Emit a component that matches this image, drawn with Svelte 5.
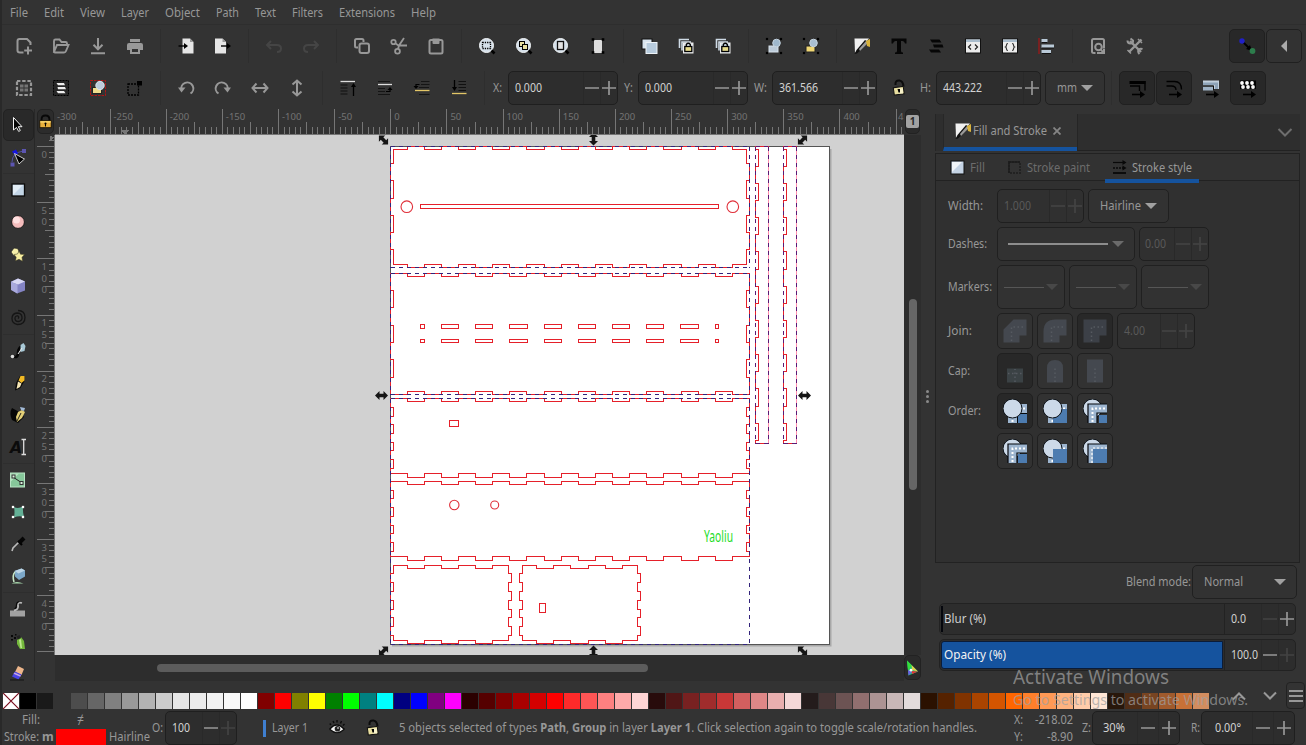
<script>
  const menus = [['File', 18], ['Edit', 20], ['View', 25], ['Layer', 28], ['Object', 35], ['Path', 23], ['Text', 21], ['Filters', 31], ['Extensions', 56], ['Help', 25]];

  const G = '#989898';
  const line = (d, c = G, w = 2) => `<path d="${d}" fill="none" stroke="${c}" stroke-width="${w}"/>`;
  const fill = (d, c = G) => `<path d="${d}" fill="${c}"/>`;
  const box = (x, y, w, h, f, s = '#000', sw = 1) => `<rect x="${x}" y="${y}" width="${w}" height="${h}" fill="${f}" stroke="${s}" stroke-width="${sw}"/>`;
  const disc = (x, y, r, f, s = 'none', sw = 1) => `<circle cx="${x}" cy="${y}" r="${r}" fill="${f}" stroke="${s}" stroke-width="${sw}"/>`;
  const lens = disc(11.5, 11.5, 7, '#d5e0ea', '#f2f5f7') + line('M16.5 16.5L19.5 19.5', '#000', 2.6);
  const corners = (a, b, c, d, f = '#000', s = 2.6) => [[a, b], [c, b], [a, d], [c, d]].map(([x, y]) => `<rect x="${x - s / 2}" y="${y - s / 2}" width="${s}" height="${s}" fill="${f}"/>`).join('');
  const pad = (x, y) => box(x, y + 3.5, 7, 5, '#e8dc8c', '#000', 1.3) + line(`M${x + 1.5} ${y + 3.5}v-2q2-2.5 4 0v2`, '#000', 1.3);
  const lowArrow = line('M7 18.500h9', '#000', 1.6) + fill('M15 15l5 3.500-5 3.500z', '#000');

  const icons = {
    new: line('M11.500 18.500H8Q5.500 18.500 5.500 16.500V7q0-2 2-2h7.500l3.500 3.500V11') + line('M16 12.500v8M12.200 16.500h7.800'),
    open: line('M5 18V7q0-1.500 1.500-1.500h4l2 2.500h4q1.500 0 1.500 1.500V11M5 18l3-7h11.500l-2.500 6q-.5 1.500-2 1.500H6z', G, 1.9),
    save: line('M12 4v11M7.500 10.800l4.500 4.500 4.500-4.500M5 19.200h14'),
    print: fill('M7 5h10v3H7zM4 11q0-2 2-2h12q2 0 2 2v5h-3v-3H7v3H4z') + line('M8 14h8v5H8z'),
    imp: fill('M8.500 4.500h7.500l3.500 3.500v11.500h-11z', '#e6e6e6') + fill('M16 4.500l3.500 3.500h-3.500z', '#999') + line('M4.500 12h6', '#000', 1.4) + fill('M10 9l4 3-4 3z', '#000'),
    exp: fill('M4 4.500h7.500l3.500 3.500v11.500H4z', '#e6e6e6') + fill('M11.500 4.500l3.500 3.500h-3.500z', '#999') + line('M10 12h7', '#000', 1.4) + fill('M16 9l4 3-4 3z', '#000'),
    undo: line('M9 7l-4 4 4 4M5.500 11H15q4 0 4 3.500T15 18', '#454545'),
    redo: line('M15 7l4 4-4 4M18.500 11H9q-4 0-4 3.500T9 18', '#454545'),
    copy: line('M8 13.500H6.500Q5 13.500 5 12V6.500Q5 5 6.500 5H12q1.500 0 1.500 1.500V8') + '<rect x="9.500" y="9.500" width="9.500" height="9.500" rx="2" fill="none" stroke="#989898" stroke-width="2"/>',
    cut: disc(6.500, 8, 2.200, 'none', G, 1.8) + disc(10.500, 17.300, 2.400, 'none', G, 1.8) + line('M8.600 9.500L11.500 11.500M11 15l1-3.500 5-7.500M12 11.500h8', G, 1.8),
    paste: '<rect x="5.500" y="6" width="13" height="13.500" rx="1.500" fill="none" stroke="#989898" stroke-width="2"/>' + fill('M8.500 4.500h7V9q0 1-1 1h-5q-1 0-1-1z'),
    zsel: lens + '<rect x="7.500" y="8.500" width="8" height="6" fill="none" stroke="#000" stroke-width="1.300" stroke-dasharray="1.300 1"/>',
    zdraw: lens + box(7.500, 7.500, 5, 5, '#e6dfa0') + box(10.500, 10.500, 5, 5, '#e6dfa0'),
    zpage: lens + box(8.500, 7.500, 6, 8, '#e4e4e4', '#111', 1.3),
    page: fill('M8 6h8v13H8z', '#ddd') + corners(7, 5.500, 17, 18.500),
    dup: box(5, 5, 10, 10, '#d9e4ee', '#111') + box(9, 8.500, 11, 11, '#b7cbdd', '#eef3f7'),
    clone: line('M5.500 14V5.500H15M8 16.500V8h9', '#cfdbe6', 1.6) + box(9.500, 9, 9.500, 10, '#e2e8ee', '#eee') + pad(10.800, 9),
    unclone: line('M5.500 14V5.500H15M8 16.500V8h9', '#cfdbe6', 1.6) + box(9.500, 9, 9.500, 10, '#cfdde9', '#eee') + pad(10.800, 9),
    group: corners(5, 5, 19, 19, '#000', 2.2) + box(7, 12, 9, 6, '#bccbd9', '#d8e2eb') + disc(14.500, 9, 3.800, '#9fb8cd', '#c5d4e0'),
    ungroup: corners(5, 5, 19, 19, '#000', 2.2) + box(7, 12, 9, 6, '#f0d774', '#222') + disc(14.500, 9, 3.800, '#a9bfd2', '#c5d4e0'),
    fillstroke: fill('M4.500 4.500L19 4.500 5 19z', '#f1f1f1') + fill('M19 8.500L7 19.500 4.500 20l2-4L15 6z', '#111') + fill('M9 15l7-8 2 2-8 8z', '#999') + fill('M16 7l4-2V13l-3-1z', '#d9b33c'),
    text: fill('M4.500 4.500h15v5h-1.500q-.5-2.500-2.500-2.500H14v10q0 1.500 2 1.500v1.500H8v-1.500q2 0 2-1.500V7H8.500q-2 0-2.500 2.500H4.500z', '#060606'),
    layers: fill('M6 5.500h9.500l2 3H8zM9 10.500h9.500l1 3H10zM5 15.500h10l2 3H7z', '#060606'),
    xml: box(4.500, 5, 15, 14, '#ececec', '#111') + fill('M5 5.500h14v2.500H5z', '#a9bccc') + line('M10 10.500L7.500 13l2.500 2.500M14 10.500l2.500 2.500-2.500 2.500', '#222', 1.2),
    css: box(4.500, 5, 15, 14, '#ececec', '#111') + fill('M5 5.500h14v2.500H5z', '#a9bccc') + line('M10 9.500q-1.500 0-1.500 1.500t-1 2q1 .5 1 2t1.500 1.500M14 9.500q1.500 0 1.500 1.500t1 2q-1 .5-1 2t-1.500 1.500', '#333', 1.2),
    align: line('M4 4v16', '#a01818', 1.3) + fill('M6.500 5h6v3.500h-6zM6.500 10.500H19V14H6.500zM6.500 16H16v3.500H6.500z', '#b9c9d7') + line('M6.500 8.500h6M6.500 14h12.500M6.500 19.500h9.500', '#111', 1),
    find: line('M9.500 19H8q-2 0-2-1.500V6.500Q6 5 7.500 5h9Q18 5 18 6.500v8', G, 2) + disc(12.500, 13, 3.300, 'none', G, 2) + line('M14.500 15l3.500 4.500M11 19h7v-4', G, 2),
    tools: line('M7 7l11 11M18.500 5.500L6 18', G, 2.4) + line('M4.500 6.500q0 3 3 3t2.500-3l-2.500-2M19.500 15q-3-1-4 1t1 4', G, 2) + line('M15 5l4 4M4.500 16l3.500 3.500', G, 1.5),
    snap: line('M8 8l7 7', '#000', 1.8) + fill('M17 17l-6-2 4-4z', '#000') + disc(7, 7, 2.700, '#2020c8') + disc(17.500, 17, 2.900, '#2d7d4c'),
    left: fill('M15 6v12L9 12z', '#aaa'),
    // selection and transform controls
    selall: '<rect x="5" y="5" width="14" height="14" fill="none" stroke="#989898" stroke-width="2.200" stroke-dasharray="3.400 1.800"/>' + '<path d="M8 10h8M8 14h8" stroke="#747474" stroke-width="3" stroke-dasharray="3.500 1"/>',
    sellay: '<rect x="4.500" y="4.500" width="15" height="15" fill="#262626" stroke="#000" stroke-dasharray="2 1"/>' + fill('M7.500 7h7.500l1 2.200H9zM8.500 11h7.500l1 2.200H9zM7.500 15h7.500l1.500 2.200H9z', '#eee'),
    desel: '<rect x="4.500" y="4.500" width="15" height="15" fill="none" stroke="#b01515" stroke-dasharray="2.500 1"/>' + box(6.500, 11.500, 9, 6, '#f0dc8c', '#222') + disc(14, 9.500, 4.200, '#bccbdc', '#dde6ee'),
    touch: '<rect x="5" y="8" width="10.500" height="11" fill="none" stroke="#000" stroke-width="1.300" stroke-dasharray="2 1"/>' + fill('M14 5h5v4.500h-5z', '#000'),
    rotl: line('M7.500 14a6 6 0 1 1 9 3.500') + fill('M4 11.500h7.500L7.500 16.500z'),
    rotr: line('M16.500 14a6 6 0 1 0-9 3.500') + fill('M20 11.500h-7.500l4 5z'),
    fliph: line('M6 12h12') + line('M8.500 7.500L4.500 12l4 4.500M15.500 7.500l4 4.500-4 4.500'),
    flipv: line('M12 6v12') + line('M7.500 8.500L12 4.500l4.500 4M7.500 15.500l4.500 4 4.500-4'),
    top: line('M4.500 5.500H19', '#ddd', 1.3) + line('M4.500 9h7M4.500 12h7M4.500 15h7M4.500 18h7', '#111', 1.2) + line('M17.500 9v11', '#000', 1.3) + fill('M17.500 7l2.500 4h-5z', '#000'),
    raise: line('M5 5.500h12M5 12.500h7M5 15.500h7M5 18.500h12', '#151515', 1.2) + line('M5 8.500h14', '#ddd', 1.3) + line('M13 15.500h4V13', '#000', 1.2) + fill('M17 11l2.500 3h-5z', '#000'),
    lower: line('M11 5.500h8.500M11 8.500h8.500M9 18.500h10.500M9 11.500h10', '#151515', 1.2) + line('M5 14.500h14.500', '#e3c667', 1.3) + line('M6 11V8.500h3.500', '#000', 1.2) + fill('M6 13l-2.500-3h5z', '#000'),
    bottom: line('M11.500 5.500H19M11.500 8.500H19M11.500 11.500H19M11.500 14.500H19', '#111', 1.2) + line('M5 17.500h14.500', '#e3c667', 1.3) + line('M7.500 4v8', '#000', 1.3) + fill('M7.500 15l-2.500-4h5z', '#000'),
    unlock: line('M8.500 9q-.5-5 4-4.500 3.500.5 4 6', '#0c0c0c', 2) + `<g transform="rotate(-8 12 15)">${box(6.800, 11, 10, 7.500, '#e9dfa0', '#111')}</g>` + fill('M12 12.500h4v5h-4z', '#f6f0c8') + fill('M10.500 13h2.500v3.500h-1.500z', '#000'),
    lock: line('M7.500 11V9q0-4.500 4.500-4.500T16.500 9v2', '#080808', 2.2) + box(5.500, 10.500, 13, 8, '#e9b03c', '#1a1204') + fill('M6 11h12v1.500H6z', '#ffdf78') + disc(12, 13.700, 1.200, '#000') + fill('M11.400 14h1.200v3h-1.200z', '#000'),
    scstroke: fill('M4.500 5h16v3h-16z', '#000') + line('M5 10h9.500v5M20 5v9.500', '#000', 1.4) + lowArrow,
    scround: line('M4.500 5.500h8q7 0 7 8M4.500 10h5q4.500 0 4.500 4', '#000', 1.3) + lowArrow,
    scgrad: fill('M4 4.500h16V13h-5V9.500H4z', '#c3d0dd') + fill('M4 6.500h15V13h-3V9H4z', '#8ea3b8') + fill('M4 10.500h10v4H4z', '#9fb2c5') + line('M4 10h10.500v4', '#111', 1) + lowArrow,
    scpat: fill('M4 4.500h16V13H4z', '#000') + [5.5, 10.5, 15.5].map((x) => disc(x + .5, 7, 1.900, '#fff') + disc(x + 1.500, 11, 1.900, '#f6f6f6')).join('') + lowArrow,
    // toolbox
    select: fill('M7.500 4.500v13l3-2.500 2 4 2-1-2-4H16z', '#050505') + line('M7.500 4.500v12.500l3-2.500 2.200 4 1.600-1-2-3.800H16z', '#f5f5f5', 1),
    node: line('M6 17Q6 8 17 6', '#5252a8', 1) + fill('M16 4h4v4h-4zM4.500 17.500h4v4h-4z', '#5c55b0') + fill('M6 6.500l4-2 2 4-3 2z', '#1414e0') + fill('M8.500 8.500l10 5.500-6 5z', '#000') + line('M8.500 8.500l10 5.500-5.500 5z', '#ddd', .9),
    rect: box(6, 6, 12.500, 12, '#c2d5e6', '#0b0b0b', 1.3) + fill('M7 7h10L7 17z', '#e1ecf5'),
    ellipse: disc(12, 12, 6.400, '#f4bcbc', '#191919') + disc(10.500, 10, 3.500, '#ffe0e0'),
    star: fill('M8 6l3.500 .5 1.500 2.500-1 4-4.500 .5L5 10z', '#f6efaa') + line('M8 6l3.500 .5 1.500 2.500-1 4-4.500 .5L5 10z', '#222', .7) + fill('M13 9l1.500 3.200 4 .3-2.500 2.800.5 4-3.500-2-3.500 1.500.7-3.600L8 12.500l3.500-.5z', '#f7eea0') + line('M13 9l1.500 3.200 4 .3-2.500 2.800.5 4-3.500-2-3.500 1.500.7-3.600L8 12.500l3.500-.5z', '#3b3820', .5),
    cube: fill('M12 4.500l7 3v9l-8 3-6-4V7.500z', '#8484c4') + fill('M12 4.500l7 3-7 3-7-2.500z', '#d8d8f3') + fill('M5 8l6.500 2.500v9L5 16z', '#a9a9dc'),
    spiral: line('M12 12.500q1.500-1.500 0-2.500-3-.5-3 2.500t3.500 3q4-.5 3.500-4.500T11 7q-5 .5-5 5.500t5.500 6q7.500 0 7.500-7T12 4.500', '#151515', 1.3),
    bezier: line('M6 17q6 3 6-3t6-8', '#050505', 2.6) + fill('M14.500 6l3-2 2 3-1 5-4 1z', '#a8c8d6') + line('M12 15l4-6', '#eee', 1) + disc(6.500, 17.500, 1.800, '#ddd'),
    pencil: fill('M10 12l4-7h4.500v5l-4 7-5.500 2.500z', '#070707') + fill('M14.500 5h4v4.500l-3 2.500-3-2.500z', '#f1b925') + fill('M12 10.500l3.500 2-1.500 3.500-3.500 2z', '#f5e6b4'),
    callig: fill('M6 5q-3 5 0 12l6 3 6-6-3-4z', '#060606') + fill('M12 9l4-2 3 2-3 6-5 4-1-5z', '#e3cf76') + fill('M14 4l5 1-1 3-3-1z', '#a3bbd8') + line('M11 18l4-8', '#111', .9),
    texttool: '<text x="4" y="18" font-family="DejaVu Sans" font-weight="bold" font-size="15.500" font-style="italic" fill="#0b0b0b">A</text>' + line('M15.500 4.500h4.500M15.500 19.500h4.500M17.700 5v14', '#ddd', 1.3),
    grad: box(4.500, 5, 14, 14, '#86c79a', '#b8e3c4') + fill('M5 5.500h8l-8 8z', '#b5e3c1') + line('M7 9l9 6', '#222', 1) + box(6, 7, 3, 3, '#d8f0de', '#333') + box(14, 13.500, 3, 3, '#d8f0de', '#333'),
    mesh: fill('M8 7q4 2 9-.5-.5 5 1 10.500-5-1.500-10 .5Q9 12 8 7z', '#64b096') + corners(7, 7, 17, 17, '#fff', 2.3),
    dropper: line('M6 19l1-3 6-6', '#bbb', 1.6) + line('M12 9l4 4', '#000', 2.2) + line('M13.500 10.500l4.500-4.500', '#050505', 4),
    bucket: fill('M8.500 7l7-2.500 3.500 2v6l-6 3.500-4-3.500z', '#7ba7c8') + fill('M8.500 7l7-2.500 3.500 2-6.500 3z', '#bcd5e6') + line('M9 8q-3 3-1 10', '#c9e9c9', 1.6) + fill('M5.500 19.500q5-3 12 0z', '#a9d9ae'),
    tweak: fill('M4 13.500h15v6H4z', '#a2a2a2') + line('M8 13.500q5-1 4-5t4-2.500', '#bbb', 1.8) + line('M8.500 12q2-1 2-4t3-3.500', '#080808', 1.2),
    spray: fill('M11 11l4-3 3 4 1 8-5 0-3-5z', '#74b83c') + fill('M13 11l2-1 1 9h-1.500z', '#bfe892') + fill('M10.500 7.500l3-1.500 1.500 3-3 1.500z', '#222') + fill('M5 6h2v2H5zM8 8h2v2H8zM5 10h2v1.500H5zM9 5h1.500v1.500H9z', '#080808'),
    eraser: fill('M12 5l6 3-2.500 6-6.500-3z', '#edb68b') + fill('M9 10.500l6.500 3L12.500 18.500 6 15.500z', '#4a43e6') + fill('M8.500 11.500l6.500 3-.7 1.200L7.500 12.700z', '#c8a7e0') + line('M4 19h14', '#151515', 1),
    // panel
    fillsq: box(5, 5, 13, 13, '#c4d3e4', '#111') + fill('M6 6h10L6 16z', '#f1f5f9'),
    paintsq: '<rect x="6" y="6" width="11" height="11" fill="none" stroke="#222" stroke-width="2" stroke-dasharray="2 1"/>' + line('M6 17V6h11', '#1c1c1c', 1.4),
    stylesq: line('M5 6.500h12', '#080808', 1.2) + '<path d="M5 12h12" stroke="#080808" stroke-width="1.600" stroke-dasharray="2 1"/>' + line('M5 17h13', '#080808', 1.8) + fill('M14.500 4l4 2.500-4 2.500zM14.500 9.500L18.500 12l-4 2.500z', '#080808'),
    eye: fill('M5 13q7-8 14 0-7 7-14 0z', '#f2f2f2') + line('M4.500 13.500q7-9 15 0M6 9L4.800 7.500M9 7L8 5M12 6.500V4M15.500 7.500l1-2.500M18 9.500l1.500-1.500', '#0a0a0a', 1.4) + line('M5 13.500q7 6.500 14 0', '#111', 1.1) + disc(12.500, 12.800, 2.800, '#222') + disc(13, 12, 1, '#aaa'),
    cms: fill('M6 4.500l11 11-9.500 4z', '#19c37a') + fill('M6 4.500l5 5-4 5z', '#35e03a') + fill('M10.500 9l6.500 6.500-6-1.500z', '#ddd24c') + fill('M10.500 15l6.500 .5-6 2.500z', '#e33434') + fill('M7 14l4 2-3.500 3.500z', '#6f5ae8') + disc(10, 14.200, 1.400, '#fff')
  };

  const dots = (d) => `<path d="${d}" fill="none" stroke="#565a61" stroke-width="1.500" stroke-dasharray="1.500 2.500"/>`;
  const J = '#44484f';
  const joins = [
    fill('M.5 23.500v-13l10-10h13v16h-7v7z', J) + dots('M8.500 22V8h14'),
    fill('M.5 23.500v-11q0-12 12-12h11v16h-7v7z', J) + dots('M8.500 22V8h14'),
    fill('M.5 23.500V.5h23v16h-7v7z', '#3c4047') + dots('M8.500 22V8h14')
  ];
  const caps = [
    fill('M4 9.500h16v14H4z', '#3b4245') + dots('M12 23V10M5 14.500h14'),
    fill('M4 23.500V9q0-8 8-8t8 8v14.500z', J) + dots('M12 23V9'),
    fill('M4 .5h16v23H4z', J) + dots('M12 23V9')
  ];
  const circ = disc(9.500, 9.500, 9.500, '#ccd9e8', '#0b1016', 1);
  const blue = (x, y) => `<rect x="${x}" y="${y}" width="${24 - x}" height="${24 - y}" fill="#4d7cb0"/>`;
  const ell = fill('M5 5h19v9H14v10H5z', '#9db5cf') + '<path d="M9.500 23V9.500H24" fill="none" stroke="#fff" stroke-width="2" stroke-dasharray="2 2"/>';
  const ellO = ell + line('M5 24V5h19', '#05080c', 1.2) + line('M14 24V14h10', '#05080c', 1.2);
  const edge = (x, y) => `<path d="M${x + 1} 24V${y + 1}H24" fill="none" stroke="#fff" stroke-width="1.200" stroke-dasharray="2 2"/>`;
  const orders = [
    ell + blue(15, 15) + line('M14.500 24v-9.500H24', '#05080c', 1) + circ,
    ell + blue(10, 10) + circ,
    circ + ellO + blue(16, 16),
    circ + ellO + blue(15, 15),
    ell + circ + blue(10, 10),
    circ + fill('M5 5h19v19H5z', '#9db5cf') + line('M5 24V5h19', '#05080c', 1.2) + blue(10, 10) + edge(8, 8)
  ];

  const row1 = ['new', 'open', 'save', 'print', '', 'imp', 'exp', '', 'undo', 'redo', '', 'copy', 'cut', 'paste', '', 'zsel', 'zdraw', 'zpage', 'page', '', 'dup', 'clone', 'unclone', '', 'group', 'ungroup', '', 'fillstroke', 'text', 'layers', 'xml', 'css', 'align', '', 'find', 'tools'];
  const row2 = ['selall', 'sellay', 'desel', 'touch', '', 'rotl', 'rotr', 'fliph', 'flipv', '', 'top', 'raise', 'lower', 'bottom', ''];
  const tools = ['select', 'node', '', 'rect', 'ellipse', 'star', 'cube', 'spiral', '', 'bezier', 'pencil', 'callig', 'texttool', '', 'grad', 'mesh', 'dropper', 'bucket', '', 'tweak', 'spray', 'eraser'];

  const swatches = '000000 1a1a1a 333333 4d4d4d 666666 808080 999999 b3b3b3 cccccc e6e6e6 ececec f2f2f2 f9f9f9 ffffff 800000 ff0000 808000 ffff00 008000 00ff00 008080 00ffff 000080 0000ff 800080 ff00ff 2b0000 550000 800000 aa0000 d40000 ff0000 ff2a2a ff5555 ff8080 ffaaaa ffd5d5 280b0b 501616 782121 a02c2c c83737 d35f5f de8787 e9afaf f4d7d7 241c1c 483737 6c5353 916f6f ac9393 c8b7b7 e3dbdb 2b1100 552200 803300 aa4400 d45500 ff6600 ff7f2a ff9955 ffb380 ffccaa ffe6d5 28170b 502d16 784421 a05a2c c87137 d38d5f'.split(' ');

  // rulers: 1 mm = 1.1229 px at 30 % zoom
  const mm = 1.1229;
  const hTicks = [];
  for (let v = -295; v <= 455; v += 5) hTicks.push({ v, p: Math.floor(390.8 + v * mm) + 0.5 });
  const vTicks = [];
  for (let v = -5; v <= 450; v += 5) vTicks.push({ v, p: Math.floor(146.6 + v * mm) + 0.5 });
  const len = (v, a, b, c) => (v % 50 === 0 ? a : v % 25 === 0 ? b : c);

  // finger-joint panels
  const P = 17.13;
  const seq = (from, n) => Array.from({ length: n }, (_, i) => from + i * P);
  function panel(x0, x1, y0, y1, dx, dy0, dy1, xs, ys) {
    // d* give the offset applied after each toggle
    let d = `M${x0} ${y0}`;
    let on = false;
    for (const x of xs) { d += `H${x}`; on = !on; d += `V${on ? y0 + dy0 : y0}`; }
    d += `H${x1}`; on = false;
    for (const y of ys) { d += `V${y}`; on = !on; d += `H${on ? x1 - dx : x1}`; }
    d += `V${y1}`; on = false;
    for (const x of [...xs].reverse()) { d += `H${x}`; on = !on; d += `V${on ? y1 + dy1 : y1}`; }
    d += `H${x0}`; on = false;
    for (const y of [...ys].reverse()) { d += `V${y}`; on = !on; d += `H${on ? x0 + dx : x0}`; }
    return d + 'Z';
  }
  const small = [573.7, 582.3, 591.3, 600, 609, 617.3, 626.3, 635.3];
  const panels = [
    panel(393.5, 746.5, 149.5, 264.5, -3, -3, 3, seq(407, 20), [163.5, 180.5, 198, 215.3, 232.5, 249.5]),
    panel(390.5, 749.5, 273.5, 394.5, 3, 3, -3, seq(407, 20), [290.3, 307.6, 325.3, 342.5, 359.5, 377.5]),
    panel(390.5, 749.5, 398.5, 473.6, 3, 3, 3.5, seq(407, 20), [407.3, 416.3, 424.7, 433.3, 442.3, 450.7, 459.3, 468.3]),
    panel(390.5, 749.5, 481.5, 556.6, 3, 3, 3.5, seq(407, 20), [490.3, 498.7, 507.7, 516.3, 525, 533.3, 542.3, 551.3]),
    panel(393.5, 508.5, 565.5, 640.5, -3, 3, 3, seq(407, 6), small),
    panel(522.5, 637.5, 565.5, 640.5, -3, 3, 3, seq(536.7, 6), small)
  ];
  function strip(x0, x1) {
    let d = `M${x1} 146.5H${x0}V149.500H${x0 + 3.5}`;
    let on = true;
    for (const y of seq(166.3, 17)) { d += `V${y}`; on = !on; d += `H${on ? x0 + 3.5 : x0}`; }
    return d + `V443.500H${x1}`;
  }
  const strips = [strip(755, 768.5), strip(783, 796.5)];
  const bounds = [[390.5, 146.5, 359, 121], [390.5, 273.5, 359, 121], [390.5, 398.5, 359, 246], [755.5, 146.5, 13, 297], [783.5, 146.5, 13, 297]];
  const slots = Array.from({ length: 8 }, (_, i) => 441.4 + i * 34.2);
  const handles = [[383.5, 140, 45], [593.5, 139, 90], [802.5, 140, -45], [381.500, 395.5, 0], [804.5, 395.5, 0], [383.5, 651, -45], [593.5, 652, 90], [802.5, 651, 45]];
</script>

{#snippet t(s, w, size = 12, cls = '')}
  <svg class="t {cls}" width={w} height="18"><text x="0" y="13" font-size={size} textLength={w} lengthAdjust="spacingAndGlyphs">{s}</text></svg>
{/snippet}

{#snippet ico(n)}
  <svg class="ico" width="24" height="24" viewBox="0 0 24 24">{@html icons[n]}</svg>
{/snippet}

{#snippet spin(w, h, value, vw, opts = {})}
  <div class="spin" class:off={opts.off} style:width="{w}px" style:height="{h}px" style:--cell="{opts.cell ?? 17}px" style:--pad="{opts.pad ?? 6}px">
    <span class="val">{@render t(value, vw, 12)}</span>
    <span class="cell" class:dim={opts.noMinus}><svg width="14" height="14"><path d="M0 7h14" /></svg></span>
    <span class="cell" class:dim={opts.noPlus}><svg width="14" height="14"><path d="M0 7h14M7 0v14" /></svg></span>
  </div>
{/snippet}

{#snippet tri()}
  <svg class="tri" width="12" height="6"><path d="M0 0h12L6 6z" /></svg>
{/snippet}

<div class="app">
  <nav class="menubar">
    {#each menus as [m, w]}{@render t(m, w, 12)}{/each}
  </nav>

  <div class="bar">
    {#each row1 as n}
      {#if n}<div class="slot">{@render ico(n)}</div>{:else}<div class="sep"></div>{/if}
    {/each}
    <div class="btns end">
      <div class="btn pressed">{@render ico('snap')}</div>
      <div class="btn">{@render ico('left')}</div>
    </div>
  </div>

  <div class="bar second">
    {#each row2 as n}
      {#if n}<div class="slot">{@render ico(n)}</div>{:else}<div class="sep"></div>{/if}
    {/each}
    <div class="field xl">{@render t('X:', 9)}{@render spin(110, 34, '0.000', 27)}</div>
    <div class="field yl">{@render t('Y:', 9)}{@render spin(110, 34, '0.000', 27)}</div>
    <div class="field wl">{@render t('W:', 13)}{@render spin(105, 34, '361.566', 39)}</div>
    <div class="slot lockslot">{@render ico('unlock')}</div>
    <div class="field hl">{@render t('H:', 11)}{@render spin(105, 34, '443.222', 39)}</div>
    <div class="combo unit">{@render t('mm', 20)}{@render tri()}</div>
    <div class="sep"></div>
    <div class="btns snapbtns">
      <div class="btn pressed">{@render ico('scstroke')}</div>
      <div class="btn pressed">{@render ico('scround')}</div>
      <div class="btn flat">{@render ico('scgrad')}</div>
      <div class="btn pressed">{@render ico('scpat')}</div>
    </div>
  </div>

  <main>
    <aside class="toolbox">
      {#each tools as n}
        {#if n}<div class="tool" class:active={n === 'select'}>{@render ico(n)}</div>{:else}<div class="hsep"></div>{/if}
      {/each}
    </aside>

    <section class="work">
      <div class="corner">{@render ico('lock')}</div>
      <svg class="ruler" width="849" height="26" viewBox="55 109 849 26">
        {#each hTicks as k}
          <path d="M{k.p} 134V{134 - len(k.v, 25, 12, 7)}" />
        {/each}
        {#each [-300, -250, -200, -150, -100, -50, 0, 50, 100, 150, 200, 250, 300, 350, 400] as v}
          <text x={v === -300 ? 57 : 390.8 + v * mm + 3.500} y="120">{v}</text>
        {/each}
        <text x="898" y="120">4</text>
        <path class="mark" d="M120.500 129.500h9l-4.500 5z" />
        <path d="M55 134.500H904" />
      </svg>
      <div class="pagebtn"><span>1</span></div>

      <svg class="ruler" width="19" height="520" viewBox="36 135 19 520">
        {#each vTicks as k}
          <path d="M54 {k.p}H{54 - len(k.v, 17, 9, 5)}" />
        {/each}
        {#each [0, 50, 100, 150, 200, 250, 300, 350, 400] as v}
          {#each String(v).split('') as c, i}
            <text x="41.500" y={157.800 + v * mm + i * 11.500}>{c}</text>
          {/each}
        {/each}
        <path class="mark" d="M49.500 136v6l5-5z" />
        <path d="M54.500 135V655" />
      </svg>

      <svg class="canvas" width="849" height="520" viewBox="55 135 849 520">
        <rect class="shadow" x="392" y="149" width="439.500" height="497.500" />
        <rect class="page" x="390.500" y="146.500" width="439" height="498" />
        <g class="cut">
          {#each panels as d}<path {d} />{/each}
          {#each strips as d}<path {d} />{/each}
          <path class="soft" d="M768.500 146.500V443.500M796.500 146.500V443.500" />
          <rect x="420.500" y="204.500" width="298" height="4" />
          {#each [324.5, 339.5] as y, r}
            <rect x="420.500" {y} width="4" height={r ? 3 : 4} />
            {#each slots as x}<rect {x} {y} width="17.300" height={r ? 3 : 4} />{/each}
            <rect x="715.500" {y} width="3" height={r ? 3 : 4} />
          {/each}
          <rect x="449.500" y="420.500" width="9" height="6" />
          <rect x="539.500" y="603.500" width="6" height="9" />
        </g>
        <g class="round">
          <circle cx="406.800" cy="206.700" r="5.800" />
          <circle cx="732.800" cy="206.700" r="5.800" />
          <circle cx="454.300" cy="505" r="4.700" />
          <circle cx="494.700" cy="505" r="4" />
        </g>
        {#each bounds as [x, y, w, h], i}
          <path class="bound" class:narrow={i > 2} d="M{x} {y}h{w}M{x} {y + h}h{w}M{x} {y}v{h}M{x + w} {y}v{h}" />
        {/each}
        <text class="sig" x="704" y="542" textLength="29" lengthAdjust="spacingAndGlyphs">Yaoliu</text>
        {#each handles as [x, y, a]}
          <path class="handle" transform="translate({x} {y}) rotate({a})" d="M-6.500 0L-2-4.500V-1.800H2V-4.500L6.500 0 2 4.500V1.800H-2V4.500z" />
        {/each}
      </svg>
      <div class="vscroll"><i></i></div>

      <div class="blank"></div>
      <div class="hscroll"><i></i></div>
      <div class="cms">{@render ico('cms')}</div>
    </section>

    <div class="splitter"><i></i><i></i><i></i></div>

    <aside class="dock">
      <div class="tabs">
        <div class="tab">{@render ico('fillstroke')}{@render t('Fill and Stroke', 74)}
          <svg class="close" width="8" height="8"><path d="M.5 .5l7 7M7.500 .5l-7 7" /></svg>
        </div>
        <div class="tabrest"><svg width="16" height="9"><path d="M1.500 1l6.500 6.500L14.500 1" /></svg></div>
      </div>
      <div class="panel">
        <div class="subtabs">
          <div class="sub s1">{@render ico('fillsq')}{@render t('Fill', 15, 12, 'faint')}</div>
          <div class="sub s2">{@render ico('paintsq')}{@render t('Stroke paint', 63, 12, 'faint')}</div>
          <div class="sub s3 on">{@render ico('stylesq')}{@render t('Stroke style', 60)}</div>
        </div>
        <div class="form">
          <div class="row">
            <div class="lab">{@render t('Width:', 35)}</div>
            {@render spin(87, 34, '1.000', 27, { off: true })}
            <div class="combo w81">{@render t('Hairline', 41)}{@render tri()}</div>
          </div>
          <div class="row">
            <div class="lab">{@render t('Dashes:', 39)}</div>
            <div class="combo dash"><i></i>{@render tri()}</div>
            {@render spin(70, 34, '0.00', 21, { off: true, pad: 5 })}
          </div>
          <div class="row tall">
            <div class="lab">{@render t('Markers:', 44)}</div>
            {#each [0, 1, 2] as _}<div class="combo marker"><i></i>{@render tri()}</div>{/each}
          </div>
          <div class="row mid">
            <div class="lab">{@render t('Join:', 24)}</div>
            {#each joins as j, i}<div class="btn" class:pressed={i === 2}><svg width="24" height="24">{@html j}</svg></div>{/each}
            {@render spin(78, 36, '4.00', 21, { off: true })}
          </div>
          <div class="row mid">
            <div class="lab">{@render t('Cap:', 22)}</div>
            {#each caps as c, i}<div class="btn" class:pressed={i === 0}><svg width="24" height="24">{@html c}</svg></div>{/each}
          </div>
          <div class="row mid">
            <div class="lab">{@render t('Order:', 33)}</div>
            {#each orders.slice(0, 3) as o, i}<div class="btn" class:pressed={i === 0}><svg width="24" height="24">{@html o}</svg></div>{/each}
          </div>
          <div class="row mid">
            <div class="lab"></div>
            {#each orders.slice(3) as o}<div class="btn"><svg width="24" height="24">{@html o}</svg></div>{/each}
          </div>
        </div>
      </div>
      <div class="blend">
        {@render t('Blend mode:', 65)}
        <div class="combo mode">{@render t('Normal', 39)}{@render tri()}</div>
      </div>
      <div class="slider">
        <div class="track"><b></b>{@render t('Blur (%)', 42, 12, 'bright')}</div>
        {@render spin(71, 30, '0.0', 15, { noMinus: true })}
      </div>
      <div class="slider">
        <div class="track full">{@render t('Opacity (%)', 62, 12, 'white')}</div>
        {@render spin(71, 30, '100.0', 27, { noPlus: true })}
      </div>
    </aside>
  </main>

  <div class="palette">
    <svg class="none" width="16" height="16"><path d="M0 0L16 16M16 0L0 16" /></svg>
    {#each swatches as c}<i style:background="#{c}"></i>{/each}
    <div class="palctl">
      <svg width="16" height="10"><path d="M2 8.500l6-6 6 6" /></svg>
      <svg width="16" height="10"><path d="M2 1.500l6 6 6-6" /></svg>
      <div class="burger"><svg width="14" height="14"><path d="M0 2h14M0 7h14M0 12h14" /></svg></div>
    </div>
  </div>

  <footer>
    <div class="style">
      <div class="sl fl">{@render t('Fill:', 18)}<span class="ne">{@render t('≠', 7)}</span></div>
      <div class="sl">{@render t('Stroke:', 35)}<svg class="t m" width="10" height="18"><text x="0" y="13" font-size="12" font-weight="bold">m</text></svg><b class="red"></b>{@render t('Hairline', 41)}</div>
    </div>
    <div class="opac">{@render t('O:', 11)}{@render spin(72, 34, '100', 18, { noPlus: true, pad: 6 })}</div>
    <div class="layer"><b></b>{@render t('Layer 1', 36)}<span class="eye">{@render ico('eye')}</span><span class="lk">{@render ico('unlock')}</span></div>
    <svg class="t msg" width="580" height="18"><text x="0" y="13" font-size="12" textLength="578" lengthAdjust="spacingAndGlyphs">5 objects selected of types <tspan font-weight="bold">Path</tspan>, <tspan font-weight="bold">Group</tspan> in layer <tspan font-weight="bold">Layer 1</tspan>. Click selection again to toggle scale/rotation handles.</text></svg>
    <div class="coords">
      <div>{@render t('X:', 9)}{@render t('-218.02', 38)}</div>
      <div>{@render t('Y:', 9)}{@render t('-8.90', 26)}</div>
    </div>
    <div class="zoom">{@render t('Z:', 9)}{@render spin(88, 34, '30%', 22, { cell: 21, pad: 10 })}</div>
    <div class="rot">{@render t('R:', 9)}{@render spin(94, 34, '0.00°', 26, { cell: 21, pad: 13 })}</div>
  </footer>

  <div class="watermark">
    <svg width="160" height="26"><text x="0" y="20" font-size="19" textLength="156" lengthAdjust="spacingAndGlyphs">Activate Windows</text></svg>
    <svg width="240" height="20"><text x="0" y="14" font-size="14" textLength="235" lengthAdjust="spacingAndGlyphs">Go to Settings to activate Windows.</text></svg>
  </div>
</div>

<style>
  :global(body) { margin: 0; background: #333; overflow: hidden; }
  .app { position: relative; width: 1306px; height: 745px; display: flex; flex-direction: column; overflow: hidden; background: #333; font-family: 'Noto Sans', sans-serif; color: #979797; box-sizing: border-box; border-left: 2px solid #292929; }
  .app * { box-sizing: border-box; }
  svg { display: block; flex: none; }
  .t { fill: #979797; overflow: visible; }
  .t.faint { fill: #6c6c6c; }
  .t.bright { fill: #cfcfcf; }
  .t.white { fill: #f2f2f2; }

  .menubar { display: flex; align-items: center; gap: 16px; height: 25px; padding: 1px 0 0 8px; border-bottom: 1px solid #2e2e2e; flex: none; }
  .bar { display: flex; align-items: center; height: 42px; padding-left: 3.5px; flex: none; }
  .slot { width: 37px; display: flex; justify-content: center; flex: none; }
  .sep { width: 14px; height: 34px; flex: none; background: linear-gradient(90deg, transparent 6px, #2e2e2e 6px, #2e2e2e 7px, transparent 7px); }
  .btns { display: flex; gap: 1px; }
  .btns.end { margin-left: auto; margin-right: 4px; }
  .btn { width: 36px; height: 34px; border: 1px solid #202020; border-radius: 5px; display: flex; align-items: center; justify-content: center; background: #323232; flex: none; }
  .btn.pressed { background: #282828; }
  .btn.flat { border-color: transparent; background: none; }
  .field { display: flex; align-items: center; justify-content: space-between; flex: none; }
  .xl { width: 125px; margin-left: 1px; }
  .yl { width: 124px; margin-left: 6px; }
  .wl { width: 123px; margin-left: 6px; }
  .lockslot { margin-left: 4px; }
  .hl { width: 121px; margin-left: 2px; }
  .combo { display: flex; align-items: center; justify-content: center; gap: 4px; height: 34px; border: 1px solid #202020; border-radius: 5px; background: #323232; flex: none; }
  .unit { width: 60px; margin-left: 4px; }
  .tri path { fill: #a0a0a0; }
  .snapbtns { margin-left: 0; }
  .snapbtns .btn:last-child { margin-left: 0; }

  .spin { display: flex; align-items: center; border: 1px solid #1f1f1f; border-radius: 5px; background: #2d2d2d; padding-left: var(--pad); flex: none; overflow: hidden; }
  .spin .val { flex: 1; }
  .spin .val :global(.t) { fill: #d2d2d2; }
  .spin .cell { width: var(--cell); height: 100%; border-left: 1px solid #292929; display: flex; align-items: center; justify-content: center; flex: none; }
  .spin .cell path { fill: none; stroke: #979797; stroke-width: 1.7; }
  .spin .cell.dim path { stroke: #434343; }
  .spin.off { background: #303030; }
  .spin.off .cell path { stroke: #444; }
  .spin.off .val :global(.t) { fill: #595959; }

  main { display: flex; height: 574px; flex: none; }
  .toolbox { width: 34px; padding-left: 1px; background: linear-gradient(90deg, transparent 32px, #282828 32px, #282828 33px, transparent 33px) no-repeat 0 0 / 100% 572px; }
  .tool { width: 31px; height: 32px; display: flex; align-items: center; justify-content: center; }
  .tool.active { background: #292929; border: 1px solid #222; border-radius: 5px; }
  .tool :global(svg) { margin-left: -1px; }
  .hsep { height: 1px; width: 31px; background: #2e2e2e; }

  .work { display: grid; grid-template-columns: 19px 849px 17px; grid-template-rows: 26px 520px 28px; flex: none; }
  .corner, .pagebtn, .cms { border: 1px solid #222; border-radius: 5px; display: flex; align-items: center; justify-content: center; overflow: hidden; }
  .corner { margin: 0 1px 1px 1px; background: #2c2c2c; }
  .corner :global(svg) { width: 21px; height: 22px; }
  .ruler path { stroke: #767676; stroke-width: 1; fill: none; shape-rendering: crispEdges; }
  .ruler .mark { fill: #777; stroke: none; }
  .ruler text { font-size: 9.5px; fill: #747474; }
  .pagebtn { margin: 0 1px 1px 1px; background: #2a2a2a; }
  .pagebtn span { width: 13px; height: 13px; border-radius: 2px; background: #a2a2a2; color: #2a2a2a; font-size: 10px; line-height: 13px; font-weight: bold; text-align: center; flex: none; }
  .canvas { background: #d1d1d1; }
  .page { fill: #fff; stroke: #555; stroke-width: 1; shape-rendering: crispEdges; }
  .shadow { fill: #a8a8a8; }
  .cut { fill: none; stroke: #e5202a; stroke-width: 1; shape-rendering: crispEdges; }
  .cut .soft { stroke: #ff8fae; }
  .round { fill: none; stroke: #e0303a; stroke-width: 1.1; }
  .bound { fill: none; stroke: #33247c; stroke-width: 1; stroke-dasharray: 4 4; shape-rendering: crispEdges; }
  .bound.narrow { stroke: #5a1a74; }
  .sig { fill: #1fdd2b; font-size: 15.5px; }
  .handle { fill: #151515; }
  .vscroll { background: #2d2d2d; padding: 164px 0 0 5px; }
  .vscroll i { display: block; width: 8px; height: 191px; border-radius: 4px; background: #666; }
  .hscroll { background: #2d2d2d; height: 26px; padding: 9px 0 0 102px; }
  .hscroll i { display: block; width: 491px; height: 8px; border-radius: 4px; background: #5c5c5c; }
  .cms { height: 25px; background: #2a2a2a; }

  .splitter { width: 14px; display: flex; flex-direction: column; align-items: center; justify-content: center; gap: 2px; padding-right: 1px; flex: none; }
  .splitter i { width: 3px; height: 3px; border-radius: 50%; background: #8a8a8a; }

  .dock { flex: 1; padding-top: 5px; display: flex; flex-direction: column; }
  .tabs { display: flex; height: 37px; width: 365px; padding-left: 7px; background: #2e2e2e; border-left: 1px solid #262626; }
  .tab { width: 134px; background: #333; border-bottom: 4px solid #15539e; border-left: 1px solid #272727; display: flex; align-items: center; padding-left: 7px; }
  .tab :global(.ico) { margin: 0 -2px 0 0; }
  .close { margin-left: 6px; }
  .close path { stroke: #858585; stroke-width: 1.8; fill: none; }
  .tabrest { flex: 1; border-left: 1px solid #252525; border-bottom: 1px solid #222; display: flex; align-items: center; justify-content: flex-end; padding-right: 7px; }
  .tabrest path { fill: none; stroke: #6e6e6e; stroke-width: 2; }
  .panel { width: 365px; height: 410px; margin-top: 2px; border: 1px solid #222; background: #303030; }
  .subtabs { display: flex; height: 27px; border-bottom: 1px solid #222; background: #323232; }
  .sub { display: flex; align-items: center; height: 28px; }
  .s1 { margin-left: 10px; }
  .s2 { margin-left: 18px; }
  .s3 { margin-left: 15px; padding: 3px 7px 0 3px; border-bottom: 4px solid #15539e; height: 29px; }
  .form { display: flex; flex-direction: column; gap: 4px; padding: 8px 0 0 12px; }
  .row { display: flex; gap: 4px; height: 34px; align-items: center; }
  .row.tall { height: 44px; }
  .row.mid { height: 36px; }
  .row .btn { height: 36px; }
  .lab { width: 45px; flex: none; }
  .w81 { width: 81px; }
  .dash { width: 138px; }
  .dash i { width: 100px; height: 2px; background: #8d8d8d; }
  .dash .tri path, .dash :global(.tri path) { fill: #6b6b6b; }
  .marker { width: 68px; height: 44px; gap: 2px; }
  .marker i { width: 40px; height: 1px; background: #565656; }
  .marker :global(.tri path) { fill: #484848; }
  .blend { display: flex; justify-content: flex-end; align-items: center; gap: 1px; height: 34px; margin: 2px 9px 0 0; }
  .mode { width: 105px; justify-content: space-between; padding: 0 10px 0 11px; }
  .slider { display: flex; width: 357px; height: 32px; margin: 4px 0 0 4px; border: 1px solid #222; border-radius: 5px; background: #2d2d2d; }
  .slider + .slider { margin-top: 4px; }
  .track { flex: 1; display: flex; align-items: center; padding-left: 4px; margin: 1px; }
  .track b { width: 2px; height: 26px; margin: 0 1px 0 -4px; background: #05070d; }
  .track.full { background: #15539e; border: 1px solid #0b1c38; border-radius: 3px 0 0 3px; padding-left: 2px; }
  .slider :global(.spin) { border: 0; border-left: 1px solid #222; border-radius: 0 5px 5px 0; }

  .palette { display: flex; align-items: flex-start; height: 28px; padding: 10px 0 0 1px; gap: 1px; flex: none; }
  .palette i { width: 16px; height: 16px; flex: none; }
  .none { background: #fff; }
  .none path { stroke: #7c1020; stroke-width: 1.2; }
  .palctl { display: flex; align-items: center; margin: -11px 1px 0 auto; gap: 15px; height: 27px; }
  .palctl path { fill: none; stroke: #989898; stroke-width: 2; }
  .burger { width: 19px; height: 27px; margin-left: -7px; border: 1px solid #222; border-radius: 4px; display: flex; align-items: center; justify-content: center; }

  footer { display: flex; align-items: center; height: 34px; flex: none; }
  .style { width: 148px; height: 34px; padding-left: 2px; display: flex; flex-direction: column; }
  .sl { display: flex; height: 17px; align-items: center; white-space: nowrap; }
  .fl { padding-left: 18px; }
  .ne { margin-left: 37px; }
  .m { margin-left: 3px; }
  .red { width: 50px; height: 16px; margin: 1px 3px 0 4px; background: #f00; flex: none; }
  .opac { display: flex; align-items: center; gap: 2px; margin-left: 2px; }
  .layer { display: flex; align-items: center; margin-left: 26px; width: 136px; }
  .layer b { width: 3px; height: 17px; background: #3f7fd0; margin-right: 6px; }
  .eye { margin-left: 17px; }
  .lk { margin-left: 12px; }
  .coords { width: 59px; margin-left: 35px; }
  .coords div { display: flex; justify-content: space-between; height: 17px; }
  .zoom, .rot { display: flex; align-items: center; gap: 1px; margin-left: 9px; }
  .rot { margin-left: 11px; }
  .watermark { position: absolute; left: 1011px; top: 664px; fill: rgba(160, 160, 160, 0.72); pointer-events: none; }
  .watermark svg + svg { margin-top: 1px; }
</style>
